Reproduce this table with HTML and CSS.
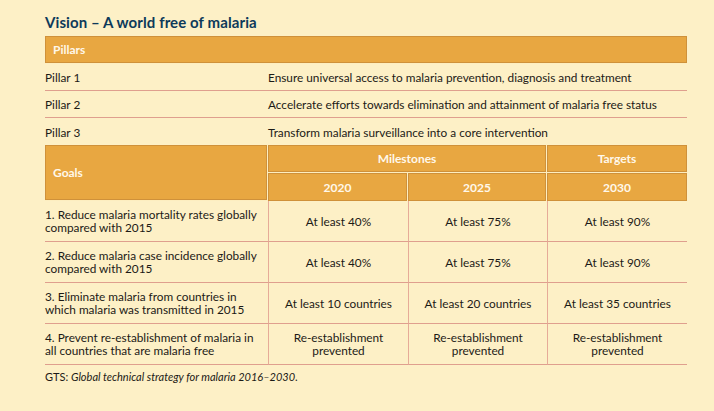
FILE: index.html
```html
<!DOCTYPE html>
<html>
<head>
<meta charset="utf-8">
<link rel="stylesheet" href="styles.css">
</head>
<body>
<div class="page">
  <h1 class="title">Vision – A world free of malaria</h1>
  <table class="gts">
    <colgroup>
      <col class="c1"><col class="c2"><col class="c3"><col class="c4">
    </colgroup>
    <tbody>
      <tr class="head-row"><th colspan="4" class="left">Pillars</th></tr>
      <tr class="pillar"><td>Pillar 1</td><td colspan="3">Ensure universal access to malaria prevention, diagnosis and treatment</td></tr>
      <tr class="pillar"><td>Pillar 2</td><td colspan="3">Accelerate efforts towards elimination and attainment of malaria free status</td></tr>
      <tr class="pillar last"><td>Pillar 3</td><td colspan="3">Transform malaria surveillance into a core intervention</td></tr>
      <tr class="head-row"><th rowspan="2" class="left">Goals</th><th colspan="2">Milestones</th><th>Targets</th></tr>
      <tr class="head-row"><th>2020</th><th>2025</th><th>2030</th></tr>
      <tr class="goal"><td>1. Reduce malaria mortality rates globally compared with 2015</td><td>At least 40%</td><td>At least 75%</td><td>At least 90%</td></tr>
      <tr class="goal"><td>2. Reduce malaria case incidence globally compared with 2015</td><td>At least 40%</td><td>At least 75%</td><td>At least 90%</td></tr>
      <tr class="goal"><td>3. Eliminate malaria from countries in which malaria was transmitted in 2015</td><td>At least 10 countries</td><td>At least 20 countries</td><td>At least 35 countries</td></tr>
      <tr class="goal"><td>4. Prevent re-establishment of malaria in all countries that are malaria free</td><td>Re-establishment prevented</td><td>Re-establishment prevented</td><td>Re-establishment prevented</td></tr>
    </tbody>
  </table>
  <p class="note">GTS: <em>Global technical strategy for malaria 2016–2030</em>.</p>
</div>
</body>
</html>
```

FILE: styles.css
```css
html, body {
  margin: 0;
  padding: 0;
  background: #fdf0c6;
}
body {
  font-family: "Lato", "Liberation Sans", sans-serif;
  color: #1c1a16;
  width: 714px;
  height: 411px;
  overflow: hidden;
}
.page {
  padding: 14px 0 0 45px;
}
.title {
  margin: 0 0 5px 0;
  font-size: 15px;
  font-weight: 700;
  color: #0d3a5a;
  line-height: 17px;
  letter-spacing: 0.1px;
}
.gts {
  border-collapse: separate;
  border-spacing: 0;
  table-layout: fixed;
  width: 642px;
  font-size: 11.8px;
}
.c1 { width: 223px; }
.c2 { width: 140px; }
.c3 { width: 139px; }
.c4 { width: 140px; }
th {
  background: #e8a741;
  color: #fff8ea;
  font-weight: 700;
  font-size: 12px;
  height: 27px;
  padding: 0;
  text-align: center;
  box-shadow: inset 0 0 0 1px #cf913a;
  border-right: 1px solid #fdeec0;
  border-bottom: 1px solid #fdeec0;
}
th:last-child { border-right: none; }
th.left {
  text-align: left;
  padding-left: 8px;
}
.head-row + .head-row th { border-bottom: none; height: 28px; }
.pillar td {
  height: 25px;
  padding: 1px 0 0 0;
  vertical-align: middle;
  border-bottom: 1px solid #df9f8e;
}
.pillar.last td { border-bottom: none; height: 26px; }
.goal td {
  height: 40px;
  padding: 0;
  text-align: center;
  vertical-align: middle;
  line-height: 13px;
  border-bottom: 1px solid #df9f8e;
  border-left: 1px solid #e6ab98;
}
.goal td:first-child {
  text-align: left;
  border-left: none;
  padding-right: 6px;
}
.goal td:not(:first-child) { padding: 0 14px; }
.note {
  margin: 5px 0 0 0;
  font-size: 11px;
  line-height: 13px;
}
.note em { font-style: italic; }
```
